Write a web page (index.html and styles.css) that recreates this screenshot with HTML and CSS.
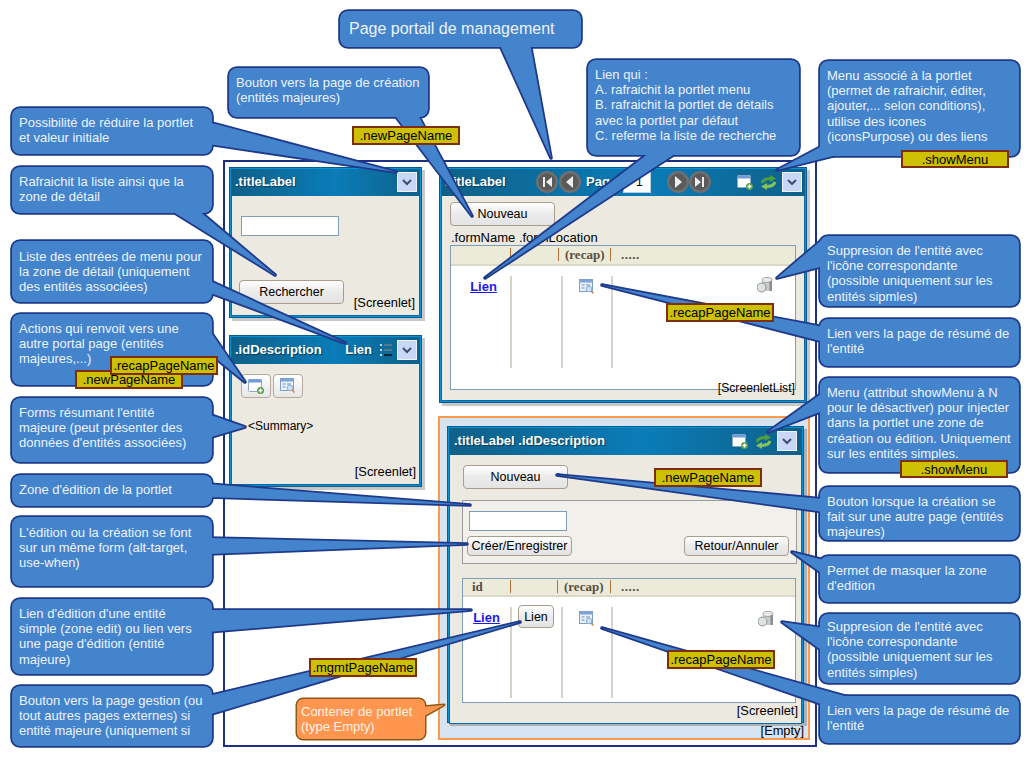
FILE: index.html
```html
<!DOCTYPE html>
<html lang="fr">
<head>
  <meta charset="UTF-8">
  <title>Page portail de management</title>
  <link rel="stylesheet" href="styles.css">
</head>
<body>
<svg class="sprites" width="0" height="0">
  <symbol id="i-add" viewBox="0 0 16 16">
    <rect x="0.5" y="1.5" width="13" height="12" rx="1" fill="#fff" stroke="#8fa8c8"/>
    <rect x="0.5" y="1.5" width="13" height="3" fill="#6f9bd6"/>
    <circle cx="12.5" cy="12.5" r="3.5" fill="#5da04a"/>
    <path d="M10.5 12.5h4M12.5 10.5v4" stroke="#fff" stroke-width="1.4"/>
  </symbol>
  <symbol id="i-refresh" viewBox="0 0 17 15">
    <path d="M2 8C3 4.500 6 3.500 11 3.500" fill="none" stroke="#4f9f3c" stroke-width="3"/>
    <path d="M10 0l6 3.500-6 3.500z" fill="#4f9f3c"/>
    <path d="M15 7C14 10.500 11 11.500 6 11.500" fill="none" stroke="#86c45a" stroke-width="3"/>
    <path d="M7 8l-6 3.500 6 3.500z" fill="#86c45a"/>
  </symbol>
  <symbol id="i-chevron" viewBox="0 0 20 20">
    <rect x="0.5" y="0.5" width="19" height="19" fill="#c9d7f7" stroke="#eef3ff"/>
    <path d="M6 8l4 4 4-4" fill="none" stroke="#3b4f74" stroke-width="2"/>
  </symbol>
  <symbol id="i-recap" viewBox="0 0 16 16">
    <rect x="0.500" y="0.500" width="13" height="12" fill="#e9f1fb" stroke="#7d9fcb"/>
    <rect x="0.500" y="0.500" width="13" height="3" fill="#7ea4d6"/>
    <path d="M2.500 6h3M2.500 9h3M7 6h4" stroke="#6f8fba"/>
    <circle cx="10" cy="10" r="2.800" fill="#cfe2f5" stroke="#8fb0d6"/>
    <path d="M12 12l2.500 2.500" stroke="#c9884a" stroke-width="1.500"/>
  </symbol>
  <symbol id="i-trash" viewBox="0 0 16 16">
    <path d="M5 3h10v11H5z" fill="#c9cccd"/>
    <ellipse cx="10" cy="3" rx="5" ry="2.500" fill="#e8eaeb" stroke="#a2a6a8"/>
    <path d="M12.500 4v10H15V4z" fill="#8b8f92"/>
    <circle cx="4.500" cy="10.500" r="4.500" fill="#dfe1e2" stroke="#8f9496"/>
  </symbol>
  <symbol id="i-list" viewBox="0 0 14 14">
    <path d="M5 2h8M5 7h8" stroke="#6c7f8c" stroke-width="1.500"/>
    <path d="M5 12h8" stroke="#111" stroke-width="1.500"/>
    <path d="M1 2h2M1 7h2M1 12h2" stroke="#b8d8ee" stroke-width="2"/>
  </symbol>
  <symbol id="i-first" viewBox="0 0 22 22">
    <circle cx="11" cy="11" r="11" fill="#6f6f6f"/><circle cx="11" cy="11" r="8.500" fill="#5a5a5a"/>
    <path d="M7 6h2v10H7zM16 6v10l-6-5z" fill="#eee"/>
  </symbol>
  <symbol id="i-prev" viewBox="0 0 22 22">
    <circle cx="11" cy="11" r="11" fill="#6f6f6f"/><circle cx="11" cy="11" r="8.500" fill="#5a5a5a"/>
    <path d="M14 5v12l-7-6z" fill="#eee"/>
  </symbol>
  <symbol id="i-next" viewBox="0 0 22 22">
    <circle cx="11" cy="11" r="11" fill="#6f6f6f"/><circle cx="11" cy="11" r="8.500" fill="#5a5a5a"/>
    <path d="M8 5v12l7-6z" fill="#eee"/>
  </symbol>
  <symbol id="i-last" viewBox="0 0 22 22">
    <circle cx="11" cy="11" r="11" fill="#6f6f6f"/><circle cx="11" cy="11" r="8.500" fill="#5a5a5a"/>
    <path d="M13 6h2v10h-2zM6 6v10l6-5z" fill="#eee"/>
  </symbol>
</svg>

<div class="canvas">
  <div class="frame"></div>

  <!-- portlet de recherche -->
  <section class="screenlet sl-search">
    <div class="bar">
      <span class="bar-title">.titleLabel</span>
      <svg class="ic20"><use href="#i-chevron"/></svg>
    </div>
    <div class="body body-search">
      <input class="field field-search" type="text">
      <div class="foot">
        <button class="btn">Rechercher</button>
        <span class="kind kind-foot">[Screenlet]</span>
      </div>
    </div>
  </section>

  <!-- portlet resume -->
  <section class="screenlet sl-summary">
    <div class="bar">
      <span class="bar-title">.idDescription</span>
      <span class="bar-link">Lien</span>
      <svg class="ic14"><use href="#i-list"/></svg>
      <svg class="ic20"><use href="#i-chevron"/></svg>
    </div>
    <div class="body body-summary">
      <div class="actions">
        <button class="btn-ic"><svg class="ic16"><use href="#i-add"/></svg></button>
        <button class="btn-ic"><svg class="ic16"><use href="#i-recap"/></svg></button>
      </div>
      <div class="summary">&lt;Summary&gt;</div>
      <div class="kind kind-end">[Screenlet]</div>
    </div>
  </section>

  <!-- portlet liste -->
  <section class="screenlet sl-list">
    <div class="bar">
      <span class="bar-title">.titleLabel</span>
      <svg class="ic22 nav-first"><use href="#i-first"/></svg>
      <svg class="ic22 nav-prev"><use href="#i-prev"/></svg>
      <span class="page-label">Page</span>
      <input class="page-field" type="text" value="1">
      <svg class="ic22 nav-next"><use href="#i-next"/></svg>
      <svg class="ic22"><use href="#i-last"/></svg>
      <svg class="ic16 bar-add"><use href="#i-add"/></svg>
      <svg class="ic-refresh"><use href="#i-refresh"/></svg>
      <svg class="ic20"><use href="#i-chevron"/></svg>
    </div>
    <div class="body body-list">
      <button class="btn">Nouveau</button>
      <div class="form-name">.formName .formLocation</div>
      <div class="list list-top">
        <div class="list-head">
          <span></span><span></span><span class="th">(recap)</span><span class="th th-more">.....</span>
        </div>
        <div class="list-row">
          <a class="lien" href="#">Lien</a>
          <span class="cell"></span>
          <span class="cell cell-ic"><svg class="ic16"><use href="#i-recap"/></svg></span>
          <span class="cell-last"><svg class="ic16"><use href="#i-trash"/></svg></span>
        </div>
      </div>
      <span class="kind kind-list">[ScreenletList]</span>
    </div>
  </section>

  <!-- conteneur Empty -->
  <section class="empty">
    <div class="screenlet sl-edit">
      <div class="bar">
        <span class="bar-title">.titleLabel .idDescription</span>
        <svg class="ic16 bar-add"><use href="#i-add"/></svg>
        <svg class="ic-refresh"><use href="#i-refresh"/></svg>
        <svg class="ic20"><use href="#i-chevron"/></svg>
      </div>
      <div class="body body-edit">
        <button class="btn">Nouveau</button>
        <div class="edit-zone">
          <input class="field field-edit" type="text">
          <div class="edit-actions">
            <button class="btn">Créer/Enregistrer</button>
            <button class="btn">Retour/Annuler</button>
          </div>
        </div>
        <div class="list list-bottom">
          <div class="list-head">
            <span class="th">id</span><span></span><span class="th">(recap)</span><span class="th th-more">.....</span>
          </div>
          <div class="list-row">
            <a class="lien" href="#">Lien</a>
            <span class="cell cell-btn"><button class="btn btn-lien">Lien</button></span>
            <span class="cell cell-ic"><svg class="ic16"><use href="#i-recap"/></svg></span>
            <span class="cell-last"><svg class="ic16"><use href="#i-trash"/></svg></span>
          </div>
        </div>
        <div class="kind kind-end">[Screenlet]</div>
      </div>
    </div>
    <div class="kind kind-end">[Empty]</div>
  </section>

  <!-- bulles : contour puis remplissage pour fondre la queue dans la boite -->
  <svg class="bubbles" width="1024" height="768">
    <defs>
      <g id="shapes">
        <rect x="340" y="11" width="241" height="36" rx="8"/><polygon points="499,43 551,158 530,43"/>
        <rect x="229" y="68" width="199" height="49" rx="8"/><polygon points="393,113 472,216 417,113"/>
        <rect x="588" y="60" width="211" height="95" rx="8"/><polygon points="653,150 485,278 681,150"/>
        <rect x="820" y="61" width="199" height="95" rx="8"/><polygon points="824,145 777,170 845,153"/>
        <rect x="12" y="108" width="200" height="46" rx="8"/><polygon points="208,122 396,172 208,144"/>
        <rect x="12" y="167" width="200" height="46" rx="8"/><polygon points="170,210 275,275 198,210"/>
        <rect x="12" y="241" width="200" height="61" rx="8"/><polygon points="208,280 345,343 208,292"/>
        <rect x="12" y="314" width="200" height="71" rx="8"/><polygon points="208,328 245,382 208,352"/>
        <rect x="12" y="398" width="200" height="64" rx="8"/><polygon points="208,414 245,427 208,438"/>
        <rect x="12" y="475" width="200" height="31" rx="8"/><polygon points="208,484 470,505 208,497"/>
        <rect x="12" y="517" width="200" height="69" rx="8"/><polygon points="208,538 467,544 208,554"/>
        <rect x="12" y="599" width="200" height="75" rx="8"/><polygon points="208,610 471,610 208,632"/>
        <rect x="12" y="686" width="200" height="60" rx="8"/><polygon points="208,696 520,622 208,715"/>
        <rect x="820" y="236" width="199" height="70" rx="8"/><polygon points="824,238 777,278 824,266"/>
        <rect x="820" y="319" width="199" height="47" rx="8"/><polygon points="824,327 602,285 824,342"/>
        <rect x="820" y="378" width="199" height="94" rx="8"/><polygon points="825,391 768,432 825,410"/>
        <rect x="820" y="487" width="199" height="53" rx="8"/><polygon points="824,499 557,475 824,512"/>
        <rect x="820" y="556" width="199" height="46" rx="8"/><polygon points="824,560 792,552 824,575"/>
        <rect x="820" y="614" width="199" height="69" rx="8"/><polygon points="824,628 782,622 824,652"/>
        <rect x="820" y="696" width="199" height="47" rx="8"/><polygon points="852,698 602,628 824,705"/>
      </g>
      <g id="shape-orange">
        <rect x="297" y="699" width="128" height="40" rx="6"/><polygon points="421,707 444,705 421,718"/>
      </g>
    </defs>
    <use href="#shapes" class="b-line"/>
    <use href="#shapes" class="b-fill"/>
    <use href="#shape-orange" class="o-line"/>
    <use href="#shape-orange" class="o-fill"/>
  </svg>

  <p class="note n-title">Page portail de management</p>
  <p class="note n-create">Bouton vers la page de création<br>(entités majeures)</p>
  <p class="note n-lien">Lien qui :<br>A. rafraichit la portlet menu<br>B. rafraichit la portlet de détails<br>avec la portlet par défaut<br>C. referme la liste de recherche</p>
  <p class="note n-menu">Menu associé à la portlet<br>(permet de rafraichir, éditer,<br>ajouter,... selon conditions),<br>utilise des icones<br>(iconsPurpose) ou des liens</p>
  <p class="note n-reduce">Possibilité de réduire la portlet<br>et valeur initiale</p>
  <p class="note n-refresh">Rafraichit la liste ainsi que la<br>zone de détail</p>
  <p class="note n-entries">Liste des entrées de menu pour<br>la zone de détail (uniquement<br>des entités associées)</p>
  <p class="note n-actions">Actions qui renvoit vers une<br>autre portal page (entités<br>majeures,...)</p>
  <p class="note n-forms">Forms résumant l'entité<br>majeure (peut présenter des<br>données d'entités associées)</p>
  <p class="note n-zone">Zone d'édition de la portlet</p>
  <p class="note n-same">L'édition ou la création se font<br>sur un même form (alt-target,<br>use-when)</p>
  <p class="note n-edit">Lien d'édition d'une entité<br>simple (zone edit) ou lien vers<br>une page d'édition (entité<br>majeure)</p>
  <p class="note n-gestion">Bouton vers la page gestion (ou<br>tout autres pages externes) si<br>entité majeure (uniquement si</p>
  <p class="note n-suppr1">Suppresion de l'entité avec<br>l'icône correspondante<br>(possible uniquement sur les<br>entités sipmles)</p>
  <p class="note n-resume1">Lien vers la page de résumé de<br>l'entité</p>
  <p class="note n-attr">Menu (attribut showMenu à N<br>pour le désactiver) pour injecter<br>dans la portlet une zone de<br>création ou édition. Uniquement<br>sur les entités simples.</p>
  <p class="note n-bouton">Bouton lorsque la création se<br>fait sur une autre page (entités<br>majeures)</p>
  <p class="note n-mask">Permet de masquer la zone<br>d'edition</p>
  <p class="note n-suppr2">Suppresion de l'entité avec<br>l'icône correspondante<br>(possible uniquement sur les<br>entités simples)</p>
  <p class="note n-resume2">Lien vers la page de résumé de<br>l'entité</p>
  <p class="note n-contener">Contener de portlet<br>(type Empty)</p>

  <span class="tag t-new1">.newPageName</span>
  <span class="tag t-show1">.showMenu</span>
  <span class="tag t-recap1">.recapPageName</span>
  <span class="tag t-new2">.newPageName</span>
  <span class="tag t-recap2">.recapPageName</span>
  <span class="tag t-show2">.showMenu</span>
  <span class="tag t-new3">.newPageName</span>
  <span class="tag t-mgmt">.mgmtPageName</span>
  <span class="tag t-recap3">.recapPageName</span>
</div>
</body>
</html>
```

FILE: styles.css
```css
* { box-sizing: border-box; }
body { margin: 0; background: #fff; font-family: "Liberation Sans", Arial, sans-serif; font-size: 12px; color: #000; overflow: hidden; }
.sprites { position: absolute; }
.canvas { position: relative; width: 1024px; height: 768px; overflow: hidden; }

.frame { position: absolute; left: 223px; top: 160px; width: 594px; height: 587px; border: 2px solid #1c2f80; }

/* screenlets */
.screenlet {
  position: absolute;
  display: flex;
  flex-direction: column;
  border: 1px solid #0c5a90;
  padding: 1px;
  background: #0893d6;
  box-shadow: 3px 3px 0 rgba(0,0,0,.22);
}
.sl-search { left: 229px; top: 167px; width: 193px; height: 151px; }
.sl-summary { left: 229px; top: 335px; width: 193px; height: 152px; }
.sl-list { left: 439px; top: 167px; width: 368px; height: 236px; }
.sl-edit { left: 7px; top: 8px; width: 357px; height: 297px; }

.bar {
  display: flex;
  align-items: center;
  flex: none;
  height: 27px;
  padding: 0 3px 1px 4px;
  background: linear-gradient(90deg, #0f6088, #0a7cb8 55%, #0f6088);
  color: #fff;
  font-weight: bold;
  font-size: 13px;
  text-shadow: 1px 1px 1px #0a3d5c;
}
.sl-edit .bar { padding: 0 5px 1px 5px; }
.bar-title { flex: 1; white-space: nowrap; padding-bottom: 2px; }
.bar-link { margin-right: 7px; padding-bottom: 2px; }
.page-label { margin-left: 5px; width: 39px; padding-bottom: 2px; }
.page-field { width: 28px; height: 21px; border: 1px solid #bcd; padding: 0 0 0 12px; font-size: 12px; margin-right: 16px; }
.nav-prev { margin-left: 1px; }
.bar-add { margin-left: 26px; }
.sl-list .bar-title { flex: none; width: 91px; }

.ic14 { width: 14px; height: 14px; flex: none; margin-right: 4px; }
.ic16 { width: 16px; height: 16px; flex: none; }
.ic20 { width: 20px; height: 20px; flex: none; }
.ic22 { width: 22px; height: 22px; flex: none; }
.ic-refresh { width: 17px; height: 15px; flex: none; margin: 0 5px 0 7px; }

.body {
  position: relative;
  flex: 1;
  display: flex;
  flex-direction: column;
  background: #ece9e1;
  border: 1px solid #0c6aa0;
  border-top: none;
}
.body-search { padding: 20px 4px 11px 7px; }
.body-summary { padding: 10px 3px 5px 9px; }
.body-list { padding: 6px 8px 0 8px; }
.body-edit { padding: 10px 3px 5px 13px; }

.field { display: block; width: 98px; height: 20px; background: #fff; border: 1px solid #7f9db9; padding: 0; }
.field-search { margin-left: 2px; }
.foot { margin-top: auto; display: flex; justify-content: space-between; align-items: flex-end; }
.kind { white-space: nowrap; font-size: 12.8px; }
.kind-foot { margin-bottom: -6px; }
.kind-end { text-align: right; margin-top: auto; }
.kind-list { position: absolute; right: 9px; bottom: 5px; font-size: 12.2px; }

.btn {
  width: 105px;
  height: 24px;
  padding: 0;
  border: 1px solid #a89c8c;
  border-radius: 4px;
  background: linear-gradient(#fff, #ececec 45%, #e4e4e4);
  font: 12.5px "Liberation Sans", Arial, sans-serif;
  color: #000;
}
.btn-ic {
  width: 30px;
  height: 24px;
  padding: 0;
  display: flex;
  align-items: center;
  justify-content: center;
  border: 1px solid #b5ab9c;
  border-radius: 4px;
  background: linear-gradient(#fff, #e6e6e6);
}
.actions { display: flex; gap: 2px; }
.summary { margin: 21px 0 0 7px; }

.form-name { margin: 5px 0 0 1px; line-height: 14px; white-space: nowrap; font-size: 13px; }
.list { background: #fff; border: 1px solid #7f9db9; }
.list-top { width: 346px; height: 145px; }
.list-bottom { width: 334px; height: 125px; margin: 14px 0 0 -1px; }
.list-head {
  display: grid;
  grid-template-columns: 60px 48px 52px 1fr;
  height: 20px;
  padding-bottom: 2px;
  background: #ecead9;
  border-bottom: 2px solid #dcd9c8;
  font: bold 13px "Liberation Serif", "DejaVu Serif", serif;
  color: #5a4e40;
  align-items: center;
}
.list-head > span { height: 13px; line-height: 13px; border-right: 1px solid #b56f35; padding-left: 6px; white-space: nowrap; }
.list-head > .th-more { border-right: none; padding-left: 10px; letter-spacing: .5px; }
.list-bottom .list-head { height: 18px; grid-template-columns: 48px 47px 53px 1fr; }
.list-bottom .list-head > span:first-child { padding-left: 9px; }

.list-row {
  display: grid;
  grid-template-columns: 59px 51px 52px 1fr;
  height: 92px;
  margin-top: 10px;
}
.list-bottom .list-row { grid-template-columns: 47px 51px 52px 1fr; height: 91px; }
.lien { justify-self: center; align-self: start; padding-left: 6px; font: bold 13px "Liberation Sans", Arial, sans-serif; color: #1a1aee; margin-top: 3px; }
.list-bottom .lien { padding-left: 0; }
.cell { border-left: 2px solid #d6d3ca; }
.cell-ic { display: flex; justify-content: center; padding-top: 3px; border-right: 2px solid #d6d3ca; }
.cell-last { display: flex; justify-content: flex-end; padding: 1px 22px 0 0; }
.list-bottom .cell-ic { padding-top: 4px; }
.list-bottom .cell-last { padding: 4px 21px 0 0; }
.cell-btn { padding-left: 6px; }
.btn-lien { width: 36px; height: 23px; margin-top: -2px; }

.empty {
  position: absolute;
  left: 438px;
  top: 416px;
  width: 372px;
  height: 324px;
  display: flex;
  flex-direction: column;
  padding: 0 4px 0 5px;
  background: #d6e4f1;
  border: 2px solid #ff9a4d;
}

.edit-zone { margin: 11px 0 0 -1px; height: 64px; width: 335px; padding: 10px 7px 0 4px; background: #f2f0eb; border: 1px solid #9a9a9a; }
.field-edit { margin-left: 2px; }
.edit-actions { display: flex; justify-content: space-between; margin-top: 5px; }
.edit-actions .btn { height: 20px; }

/* bulles */
.bubbles { position: absolute; left: 0; top: 0; }
.b-line { fill: #1f3a8a; stroke: #1f3a8a; stroke-width: 3.6; stroke-linejoin: round; }
.b-fill { fill: #4384cc; stroke: none; }
.o-line { fill: #8a5a14; stroke: #8a5a14; stroke-width: 3; stroke-linejoin: round; }
.o-fill { fill: #ff9650; stroke: none; }

.note { position: absolute; margin: 0; color: #eef3ff; font-size: 13px; line-height: 15.2px; white-space: nowrap; }
.n-title { left: 349px; top: 20px; font-size: 16px; line-height: 18px; }
.n-create { left: 236px; top: 75px; }
.n-lien { left: 595px; top: 67px; }
.n-menu { left: 827px; top: 68px; }
.n-reduce { left: 19px; top: 115px; }
.n-refresh { left: 19px; top: 174px; }
.n-entries { left: 19px; top: 249px; }
.n-actions { left: 19px; top: 321px; }
.n-forms { left: 19px; top: 405px; }
.n-zone { left: 19px; top: 482px; }
.n-same { left: 19px; top: 525px; }
.n-edit { left: 19px; top: 606px; }
.n-gestion { left: 19px; top: 693px; }
.n-suppr1 { left: 827px; top: 243px; }
.n-resume1 { left: 827px; top: 326px; }
.n-attr { left: 827px; top: 385px; }
.n-bouton { left: 827px; top: 494px; }
.n-mask { left: 827px; top: 563px; }
.n-suppr2 { left: 827px; top: 619px; }
.n-resume2 { left: 827px; top: 703px; }
.n-contener { left: 301px; top: 704px; color: #fff3e8; }

/* etiquettes d'attributs */
.tag {
  position: absolute;
  display: flex;
  align-items: center;
  justify-content: center;
  height: 19px;
  width: 108px;
  background: #ccc000;
  border: 2px solid #7f2e0c;
  font-size: 13px;
  white-space: nowrap;
}
.t-new1 { left: 352px; top: 126px; }
.t-show1 { left: 901px; top: 150px; height: 18px; }
.t-recap1 { left: 666px; top: 303px; }
.t-new2 { left: 75px; top: 370px; }
.t-recap2 { left: 110px; top: 356px; }
.t-show2 { left: 900px; top: 460px; height: 18px; }
.t-new3 { left: 654px; top: 468px; }
.t-mgmt { left: 309px; top: 658px; }
.t-recap3 { left: 667px; top: 650px; }
```
